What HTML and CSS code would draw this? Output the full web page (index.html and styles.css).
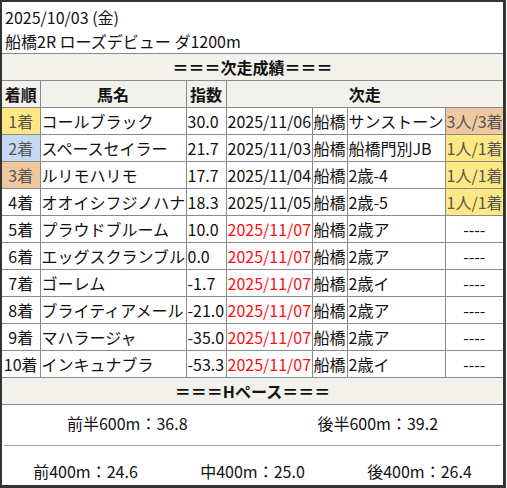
FILE: index.html
```html
<!DOCTYPE html>
<html lang="ja">
<head>
<meta charset="utf-8">
<link rel="stylesheet" href="styles.css">
</head>
<body>
<div class="card">
  <div class="head">
    <div>2025/10/03 (金)</div>
    <div>船橋2R ローズデビュー ダ1200m</div>
  </div>
  <table class="res">
    <colgroup>
      <col class="c1"><col class="c2"><col class="c3"><col class="c4"><col class="c5"><col class="c6"><col class="c7">
    </colgroup>
    <tr class="bar"><td colspan="7">＝＝＝次走成績＝＝＝</td></tr>
    <tr class="hd"><td>着順</td><td>馬名</td><td>指数</td><td colspan="4">次走</td></tr>
    <tr><td class="rk y">1着</td><td>コールブラック</td><td>30.0</td><td>2025/11/06</td><td>船橋</td><td>サンストーン</td><td class="rs t">3人/3着</td></tr>
    <tr><td class="rk b">2着</td><td>スペースセイラー</td><td>21.7</td><td>2025/11/03</td><td>船橋</td><td>船橋門別JB</td><td class="rs y">1人/1着</td></tr>
    <tr><td class="rk t">3着</td><td>ルリモハリモ</td><td>17.7</td><td>2025/11/04</td><td>船橋</td><td>2歳-4</td><td class="rs y">1人/1着</td></tr>
    <tr><td class="rk">4着</td><td>オオイシフジノハナ</td><td>18.3</td><td>2025/11/05</td><td>船橋</td><td>2歳-5</td><td class="rs y">1人/1着</td></tr>
    <tr><td class="rk">5着</td><td>プラウドブルーム</td><td>10.0</td><td class="red">2025/11/07</td><td>船橋</td><td>2歳ア</td><td class="na">----</td></tr>
    <tr><td class="rk">6着</td><td>エッグスクランブル</td><td>0.0</td><td class="red">2025/11/07</td><td>船橋</td><td>2歳ア</td><td class="na">----</td></tr>
    <tr><td class="rk">7着</td><td>ゴーレム</td><td>-1.7</td><td class="red">2025/11/07</td><td>船橋</td><td>2歳イ</td><td class="na">----</td></tr>
    <tr><td class="rk">8着</td><td>ブライティアメール</td><td>-21.0</td><td class="red">2025/11/07</td><td>船橋</td><td>2歳ア</td><td class="na">----</td></tr>
    <tr><td class="rk">9着</td><td>マハラージャ</td><td>-35.0</td><td class="red">2025/11/07</td><td>船橋</td><td>2歳ア</td><td class="na">----</td></tr>
    <tr><td class="rk">10着</td><td>インキュナブラ</td><td>-53.3</td><td class="red">2025/11/07</td><td>船橋</td><td>2歳イ</td><td class="na">----</td></tr>
    <tr class="bar"><td colspan="7">＝＝＝Hペース＝＝＝</td></tr>
  </table>
  <div class="pace p2">
    <div>前半600m：36.8</div>
    <div>後半600m：39.2</div>
  </div>
  <div class="sep"></div>
  <div class="pace p3">
    <div>前400m：24.6</div>
    <div>中400m：25.0</div>
    <div>後400m：26.4</div>
  </div>
</div>
</body>
</html>
```
FILE: styles.css
```css
html, body {
  margin: 0;
  padding: 0;
  background: #ffffff;
}
body {
  font-family: "Noto Sans CJK JP", "Noto Sans", sans-serif;
  font-size: 16px;
  color: #111;
}
.card {
  box-sizing: border-box;
  width: 506px;
  height: 488px;
  border: 2px solid #333;
  border-right-width: 3px;
  border-bottom-width: 3px;
  background: #fff;
  display: flex;
  flex-direction: column;
}
.head {
  height: 51px;
  box-sizing: border-box;
  padding: 3px 0 0 3px;
  line-height: 24px;
}
.res {
  width: 501px;
  border-collapse: collapse;
  table-layout: fixed;
}
.res col.c1 { width: 38px; }
.res col.c2 { width: 146px; }
.res col.c3 { width: 40px; }
.res col.c4 { width: 86px; }
.res col.c5 { width: 35px; }
.res col.c6 { width: 98px; }
.res col.c7 { width: 58px; }
.res td {
  border: 1px solid #8a8a8a;
  padding: 0 1px;
  line-height: 26px;
  height: 26px;
  white-space: nowrap;
  overflow: hidden;
}
.res tr td:first-child { border-left: none; }
.res tr td:last-child { border-right: none; }
.res .bar td {
  background: #f2f1ec;
  text-align: center;
  font-weight: bold;
}
.res .hd td {
  background: #f2f1ec;
  text-align: center;
  font-weight: bold;
}
.res td.rk { text-align: center; }
.res td.na { text-align: center; }
.res td.red { color: #ff1010; }
.res td.y { background: #fde883; color: #555; }
.res td.b { background: #c7d9f1; color: #555; }
.res td.t { background: #f0c8a0; color: #555; }
.pace {
  display: flex;
  line-height: 24px;
}
.pace > div {
  flex: 1;
  text-align: center;
}
.p2 {
  height: 40px;
  box-sizing: border-box;
  padding-top: 6px;
}
.sep {
  height: 1px;
  margin: 0 2px;
  background: #a8a8a8;
}
.p3 {
  flex: 1;
  box-sizing: border-box;
  padding-top: 13px;
}
```
